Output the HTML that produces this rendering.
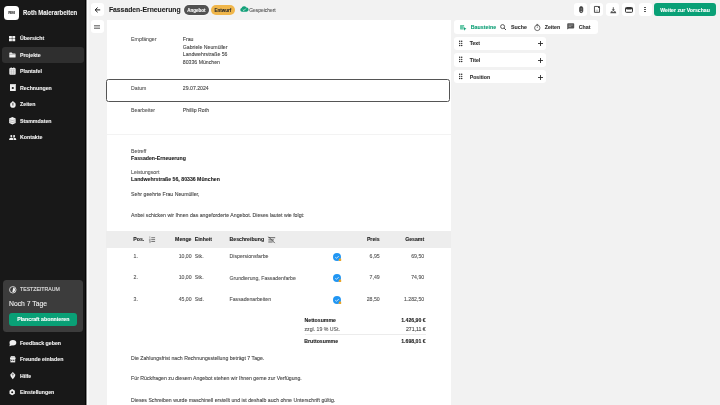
<!DOCTYPE html>
<html><head><meta charset="utf-8"><style>
html,body{margin:0;padding:0;}
body{width:720px;height:405px;overflow:hidden;position:relative;background:#f2f2f2;font-family:"Liberation Sans", sans-serif;}
.t{position:absolute;white-space:nowrap;}
body{will-change:transform;}
.r{position:absolute;display:block;overflow:visible;}
</style></head><body>
<div class="r" style="left:0px;top:0px;width:85px;height:405px;background:#181818;border-radius:0px;"></div>
<div class="r" style="left:85px;top:0px;width:1px;height:405px;background:#050505;border-radius:0px;"></div>
<div class="r" style="left:86px;top:0px;width:1px;height:405px;background:#8a8a8a;border-radius:0px;"></div>
<div class="r" style="left:87px;top:0px;width:1px;height:405px;background:#fcfcfc;border-radius:0px;"></div>
<div class="r" style="left:88px;top:0px;width:1px;height:405px;background:#f7f7f7;border-radius:0px;"></div>
<div class="r" style="left:4.4px;top:5.6px;width:14.6px;height:14.5px;background:#ffffff;border-radius:3.5px;"></div>
<div class="t" style="left:11.6px;top:11px;font-size:4.4px;line-height:4.4px;font-weight:700;color:#333;-webkit-text-stroke:0.1px #333;transform:translateX(-50%);transform-origin:center center;">RM</div>
<div class="t" style="left:23.3px;top:10px;font-size:6.8px;line-height:6.8px;font-weight:700;color:#f2f2f2;-webkit-text-stroke:0.1px #f2f2f2;transform:scaleX(0.88);transform-origin:left center;">Roth Malerarbeiten</div>
<div class="r" style="left:2.2px;top:46.5px;width:81.8px;height:16.3px;background:#2f2f2f;border-radius:3px;"></div>
<div class="t" style="left:20px;top:36px;font-size:5.25px;line-height:5.25px;font-weight:700;color:#f0f0f0;-webkit-text-stroke:0.1px #f0f0f0;">Übersicht</div>
<div class="t" style="left:20px;top:53px;font-size:5.25px;line-height:5.25px;font-weight:700;color:#f0f0f0;-webkit-text-stroke:0.1px #f0f0f0;">Projekte</div>
<div class="t" style="left:20px;top:69px;font-size:5.25px;line-height:5.25px;font-weight:700;color:#f0f0f0;-webkit-text-stroke:0.1px #f0f0f0;">Plantafel</div>
<div class="t" style="left:20px;top:86px;font-size:5.25px;line-height:5.25px;font-weight:700;color:#f0f0f0;-webkit-text-stroke:0.1px #f0f0f0;">Rechnungen</div>
<div class="t" style="left:20px;top:102px;font-size:5.25px;line-height:5.25px;font-weight:700;color:#f0f0f0;-webkit-text-stroke:0.1px #f0f0f0;">Zeiten</div>
<div class="t" style="left:20px;top:119px;font-size:5.25px;line-height:5.25px;font-weight:700;color:#f0f0f0;-webkit-text-stroke:0.1px #f0f0f0;">Stammdaten</div>
<div class="t" style="left:20px;top:135px;font-size:5.25px;line-height:5.25px;font-weight:700;color:#f0f0f0;-webkit-text-stroke:0.1px #f0f0f0;">Kontakte</div>
<svg class="r" style="left:9.1px;top:35.6px;" width="6.2" height="5.2" viewBox="0 0 6.2 5.2"><rect x="0" y="0" width="2.9" height="2.4" rx="0.3" fill="#f0f0f0"/><rect x="3.3" y="0" width="2.9" height="2.4" rx="0.3" fill="#f0f0f0"/><rect x="0" y="2.8" width="2.9" height="2.4" rx="0.3" fill="#f0f0f0"/><rect x="3.3" y="2.8" width="2.9" height="2.4" rx="0.3" fill="#f0f0f0"/></svg>
<svg class="r" style="left:8.9px;top:51.6px;" width="7" height="5.6" viewBox="0 0 7 5.6"><path d="M0.3 1.2 a0.6 0.6 0 0 1 0.6 -0.6 h1.8 l0.9 0.9 h2.4 a0.6 0.6 0 0 1 0.6 0.6 v2.8 a0.6 0.6 0 0 1 -0.6 0.6 h-5.1 a0.6 0.6 0 0 1 -0.6 -0.6z" fill="#f0f0f0"/><path d="M0.3 2.3 h6.3" stroke="#333" stroke-width="0.3"/></svg>
<svg class="r" style="left:8.9px;top:67.4px;" width="7" height="8" viewBox="0 0 7 8"><rect x="0.3" y="0.9" width="6.4" height="6.9" rx="1" fill="#f0f0f0"/><path d="M0.3 2.4h6.4M2.45 2.4v5.4M4.55 2.4v5.4M0.3 4.2h6.4M0.3 6h6.4" stroke="#9a9a9a" stroke-width="0.35"/><rect x="1.8" y="0" width="0.6" height="1.3" fill="#f0f0f0"/><rect x="4.6" y="0" width="0.6" height="1.3" fill="#f0f0f0"/></svg>
<svg class="r" style="left:9.5px;top:83.9px;" width="5.8" height="7.1" viewBox="0 0 5.8 7.1"><rect x="0" y="0" width="5.8" height="7.1" rx="0.5" fill="#f0f0f0"/><rect x="0" y="0" width="5.8" height="1.2" fill="#cfcfcf"/><circle cx="2.8" cy="4" r="1.1" fill="#181818"/></svg>
<svg class="r" style="left:9.5px;top:100.6px;" width="6" height="7" viewBox="0 0 6 7"><circle cx="2.9" cy="3.9" r="2.8" fill="#f0f0f0"/><rect x="2.4" y="0" width="1" height="1.3" fill="#f0f0f0"/><path d="M2.9 4.2 L2.9 2.4" stroke="#181818" stroke-width="0.8" stroke-linecap="round"/></svg>
<svg class="r" style="left:9px;top:116.7px;" width="6.8" height="7.5" viewBox="0 0 6.8 7.5"><path d="M3.4 0.1 L6.7 1.6 V5.9 L3.4 7.4 L0.1 5.9 V1.6Z" fill="#f0f0f0"/><path d="M0.1 2.7 Q3.4 4.2 6.7 2.7 M0.1 4.7 Q3.4 6.2 6.7 4.7" fill="none" stroke="#777" stroke-width="0.45"/></svg>
<svg class="r" style="left:8.9px;top:135.1px;" width="7.4" height="5.2" viewBox="0 0 7.4 5.2"><circle cx="2.3" cy="1.1" r="1.05" fill="#f0f0f0"/><circle cx="5.1" cy="1.1" r="1.05" fill="#f0f0f0"/><path d="M0 5.1 q0-2.6 2.3-2.6 q2.3 0 2.3 2.6z" fill="#f0f0f0"/><path d="M4.9 5.1 q0-2.3 -0.9 -2.5 q0.5 -0.1 1.1 -0.1 q2.3 0 2.3 2.6z" fill="#f0f0f0"/></svg>
<div class="r" style="left:3px;top:279.7px;width:80px;height:51.9px;background:#3c3c3c;border-radius:3.5px;"></div>
<svg class="r" style="left:9.1px;top:285.7px;" width="7.6" height="7.6" viewBox="0 0 7.6 7.6"><circle cx="3.8" cy="3.8" r="3.25" fill="none" stroke="#ddd" stroke-width="0.9"/><path d="M3.8 3.8 L4.3 1.5 A2.35 2.35 0 0 1 3.3 6.1 Z" fill="#f0f0f0"/></svg>
<div class="t" style="left:20px;top:287px;font-size:5.2px;line-height:5.2px;font-weight:400;color:#e0e0e0;-webkit-text-stroke:0.1px #e0e0e0;">TESTZEITRAUM</div>
<div class="t" style="left:8.9px;top:301px;font-size:6.9px;line-height:6.9px;font-weight:400;color:#f0f0f0;-webkit-text-stroke:0.1px #f0f0f0;transform:scaleX(0.985);transform-origin:left center;">Noch 7 Tage</div>
<div class="r" style="left:9.2px;top:313.2px;width:68.1px;height:12.9px;background:#09a076;border-radius:3px;"></div>
<div class="t" style="left:43.25px;top:317px;font-size:5.25px;line-height:5.25px;font-weight:700;color:#ffffff;-webkit-text-stroke:0.1px #ffffff;transform:translateX(-50%);transform-origin:center center;">Plancraft abonnieren</div>
<div class="t" style="left:19.9px;top:341px;font-size:5.25px;line-height:5.25px;font-weight:700;color:#f0f0f0;-webkit-text-stroke:0.1px #f0f0f0;">Feedback geben</div>
<div class="t" style="left:19.9px;top:357px;font-size:5.25px;line-height:5.25px;font-weight:700;color:#f0f0f0;-webkit-text-stroke:0.1px #f0f0f0;">Freunde einladen</div>
<div class="t" style="left:19.9px;top:374px;font-size:5.25px;line-height:5.25px;font-weight:700;color:#f0f0f0;-webkit-text-stroke:0.1px #f0f0f0;">Hilfe</div>
<div class="t" style="left:19.9px;top:390px;font-size:5.25px;line-height:5.25px;font-weight:700;color:#f0f0f0;-webkit-text-stroke:0.1px #f0f0f0;">Einstellungen</div>
<svg class="r" style="left:8.8px;top:339.8px;" width="7.4" height="6.4" viewBox="0 0 7.4 6.4"><ellipse cx="3.9" cy="2.8" rx="3.4" ry="2.7" fill="#f0f0f0"/><path d="M0.4 6.3 L1 3.6 L3 5.2z" fill="#f0f0f0"/></svg>
<svg class="r" style="left:9.5px;top:355.9px;" width="5.6" height="6.5" viewBox="0 0 5.6 6.5"><path d="M1 0 H4.6 L5.6 1.9 H0Z" fill="#cfcfcf"/><rect x="0" y="1.9" width="5.6" height="1.2" fill="#f0f0f0"/><rect x="0.4" y="3.1" width="4.8" height="3.3" fill="#e8e8e8"/><circle cx="1.8" cy="4.4" r="0.55" fill="#181818"/><circle cx="3.8" cy="4.4" r="0.55" fill="#181818"/></svg>
<svg class="r" style="left:9.7px;top:372px;" width="5.6" height="7.3" viewBox="0 0 5.6 7.3"><path d="M2.8 0.1 L5.4 2.8 Q5.4 4.4 2.8 7.2 Q0.2 4.4 0.2 2.8Z" fill="#f0f0f0"/><path d="M2.8 1.2v3.2M1.8 2.5h2" stroke="#666" stroke-width="0.6"/></svg>
<svg class="r" style="left:9.1px;top:388.8px;" width="6.4" height="6.6" viewBox="0 0 6.4 6.6"><path d="M3.2 0.1 L5.9 1.65 V4.75 L3.2 6.3 L0.5 4.75 V1.65Z" fill="#f0f0f0"/><circle cx="3.2" cy="3.2" r="1" fill="#181818"/></svg>
<div class="r" style="left:90.7px;top:2.8px;width:13.3px;height:13.3px;background:#ffffff;border-radius:3px;"></div>
<svg class="r" style="left:93.9px;top:6.8px;" width="6.6" height="5.8" viewBox="0 0 6.6 5.8"><path d="M6.2 2.9 H1.2 M3.6 0.5 L1.1 2.9 L3.6 5.3" fill="none" stroke="#222" stroke-width="1"/></svg>
<div class="r" style="left:90.7px;top:20px;width:13.3px;height:13.3px;background:#ffffff;border-radius:3px;"></div>
<svg class="r" style="left:94.3px;top:24.7px;" width="6" height="4" viewBox="0 0 6 4"><path d="M0 0.5h6M0 2h6M0 3.5h6" stroke="#555" stroke-width="0.7"/></svg>
<div class="t" style="left:108.9px;top:7px;font-size:6.8px;line-height:6.8px;font-weight:700;color:#1e1e1e;-webkit-text-stroke:0.1px #1e1e1e;">Fassaden-Erneuerung</div>
<div class="r" style="left:183.5px;top:4.9px;width:25.9px;height:10.4px;background:#525252;border-radius:5.2px;box-shadow:0 0 0 0.7px #fafafa;"></div>
<div class="t" style="left:196.45px;top:9px;font-size:4.5px;line-height:4.5px;font-weight:700;color:#ffffff;-webkit-text-stroke:0.1px #ffffff;transform:translateX(-50%);transform-origin:center center;">Angebot</div>
<div class="r" style="left:210.8px;top:4.9px;width:24.1px;height:10.4px;background:#f0b64a;border-radius:5.2px;"></div>
<div class="t" style="left:222.85px;top:9px;font-size:4.5px;line-height:4.5px;font-weight:700;color:#2a2a2a;-webkit-text-stroke:0.1px #2a2a2a;transform:translateX(-50%);transform-origin:center center;">Entwurf</div>
<svg class="r" style="left:240px;top:6.3px;" width="8.5" height="6" viewBox="0 0 8.5 6"><path d="M2 5.8 A1.9 1.9 0 0 1 1.6 2.1 A2.6 2.6 0 0 1 6.4 1.6 A2.1 2.1 0 0 1 6.6 5.8 Z" fill="#12a079"/><path d="M2.8 3.6 L3.9 4.6 L5.8 2.6" fill="none" stroke="#fff" stroke-width="0.7"/></svg>
<div class="t" style="left:249.3px;top:9px;font-size:4.9px;line-height:4.9px;font-weight:400;color:#555;-webkit-text-stroke:0.1px #555;">Gespeichert</div>
<div class="r" style="left:573.8px;top:2.8px;width:13.1px;height:13.4px;background:#ffffff;border-radius:3px;"></div>
<div class="r" style="left:590px;top:2.8px;width:13.1px;height:13.4px;background:#ffffff;border-radius:3px;"></div>
<div class="r" style="left:606.2px;top:2.8px;width:13.1px;height:13.4px;background:#ffffff;border-radius:3px;"></div>
<div class="r" style="left:622.3px;top:2.8px;width:13.1px;height:13.4px;background:#ffffff;border-radius:3px;"></div>
<div class="r" style="left:638.5px;top:2.8px;width:13.1px;height:13.4px;background:#ffffff;border-radius:3px;"></div>
<svg class="r" style="left:578.8px;top:5.9px;" width="4.4" height="7" viewBox="0 0 4.4 7"><path d="M0.55 5 V2.1 A1.65 1.65 0 0 1 3.85 2.1 V5 A1.65 1.65 0 0 1 0.55 5 Z" fill="#444" stroke="#333" stroke-width="0.6"/><path d="M2.2 2 V4.4" stroke="#bbb" stroke-width="0.5"/><rect x="1.6" y="5.2" width="1.3" height="0.7" fill="#eee"/></svg>
<svg class="r" style="left:593.9px;top:6.1px;" width="6" height="6.8" viewBox="0 0 6 6.8"><path d="M0.45 0.45 H3.6 L5.5 2.4 V6.35 H0.45Z" fill="none" stroke="#333" stroke-width="0.85"/><path d="M3.3 0.2 L5.8 2.7 L5.8 0.2Z" fill="#222"/><path d="M1.6 4.2h2.6M1.6 5.2h2.6" stroke="#999" stroke-width="0.5"/></svg>
<svg class="r" style="left:609.8px;top:6.6px;" width="6.6" height="6.4" viewBox="0 0 6.6 6.4"><path d="M3.3 0.2 V3" stroke="#555" stroke-width="0.9"/><path d="M1.6 2.4 L3.3 4.1 L5 2.4Z" fill="#333"/><path d="M0.3 6.2 Q0.4 4.3 1.8 4 L3.3 5.1 L4.8 4 Q6.2 4.3 6.3 6.2Z" fill="#555"/></svg>
<svg class="r" style="left:625.2px;top:6.7px;" width="8" height="5.8" viewBox="0 0 8 5.8"><rect x="0.5" y="0.5" width="7" height="4.8" rx="0.8" fill="none" stroke="#333" stroke-width="1"/><path d="M0.6 1 H7.4 V2 Q4 3.2 0.6 2Z" fill="#333"/></svg>
<div class="r" style="left:644.4px;top:7px;width:1.7px;height:1.2px;background:#333;border-radius:0.4px;"></div>
<div class="r" style="left:644.4px;top:9.1px;width:1.7px;height:1.2px;background:#333;border-radius:0.4px;"></div>
<div class="r" style="left:644.4px;top:11.2px;width:1.7px;height:1.2px;background:#333;border-radius:0.4px;"></div>
<div class="r" style="left:653.9px;top:2.7px;width:62.4px;height:13.6px;background:#09a076;border-radius:3px;"></div>
<div class="t" style="left:685.1px;top:8px;font-size:5.2px;line-height:5.2px;font-weight:700;color:#ffffff;-webkit-text-stroke:0.1px #ffffff;transform:translateX(-50%);transform-origin:center center;">Weiter zur Vorschau</div>
<div class="r" style="left:106.6px;top:19.8px;width:344.3px;height:386px;background:#ffffff;border-radius:0px;"></div>
<div class="t" style="left:131.1px;top:37px;font-size:5.2px;line-height:5.2px;font-weight:400;color:#5a5a5a;-webkit-text-stroke:0.1px #5a5a5a;">Empfänger</div>
<div class="t" style="left:182.8px;top:37px;font-size:5.2px;line-height:5.2px;font-weight:400;color:#474747;-webkit-text-stroke:0.1px #474747;">Frau</div>
<div class="t" style="left:182.8px;top:45px;font-size:5.2px;line-height:5.2px;font-weight:400;color:#474747;-webkit-text-stroke:0.1px #474747;">Gabriele Neumüller</div>
<div class="t" style="left:182.8px;top:52px;font-size:5.2px;line-height:5.2px;font-weight:400;color:#474747;-webkit-text-stroke:0.1px #474747;">Landwehrstraße 56</div>
<div class="t" style="left:182.8px;top:60px;font-size:5.2px;line-height:5.2px;font-weight:400;color:#474747;-webkit-text-stroke:0.1px #474747;">80336 München</div>
<div class="r" style="left:106.4px;top:79px;width:344.1px;height:22.5px;box-sizing:border-box;border:1.1px solid #555;border-radius:2.5px"></div>
<div class="t" style="left:131.1px;top:86px;font-size:5.2px;line-height:5.2px;font-weight:400;color:#5a5a5a;-webkit-text-stroke:0.1px #5a5a5a;">Datum</div>
<div class="t" style="left:182.8px;top:86px;font-size:5.2px;line-height:5.2px;font-weight:400;color:#474747;-webkit-text-stroke:0.1px #474747;">29.07.2024</div>
<div class="t" style="left:131.1px;top:108px;font-size:5.2px;line-height:5.2px;font-weight:400;color:#5a5a5a;-webkit-text-stroke:0.1px #5a5a5a;">Bearbeiter</div>
<div class="t" style="left:182.8px;top:108px;font-size:5.2px;line-height:5.2px;font-weight:400;color:#474747;-webkit-text-stroke:0.1px #474747;">Phillip Roth</div>
<div class="r" style="left:106.6px;top:134px;width:344.3px;height:1px;background:#f3f3f3;border-radius:0px;"></div>
<div class="t" style="left:131.1px;top:149px;font-size:5.2px;line-height:5.2px;font-weight:400;color:#5a5a5a;-webkit-text-stroke:0.1px #5a5a5a;">Betreff</div>
<div class="t" style="left:131.1px;top:156px;font-size:5.2px;line-height:5.2px;font-weight:700;color:#222;-webkit-text-stroke:0.1px #222;">Fassaden-Erneuerung</div>
<div class="t" style="left:131.1px;top:170px;font-size:5.2px;line-height:5.2px;font-weight:400;color:#5a5a5a;-webkit-text-stroke:0.1px #5a5a5a;">Leistungsort</div>
<div class="t" style="left:131.1px;top:177px;font-size:5.2px;line-height:5.2px;font-weight:700;color:#222;-webkit-text-stroke:0.1px #222;">Landwehrstraße 56, 80336 München</div>
<div class="t" style="left:131.1px;top:192px;font-size:5.2px;line-height:5.2px;font-weight:400;color:#474747;-webkit-text-stroke:0.1px #474747;">Sehr geehrte Frau Neumüller,</div>
<div class="t" style="left:131.1px;top:213px;font-size:5.2px;line-height:5.2px;font-weight:400;color:#474747;-webkit-text-stroke:0.1px #474747;">Anbei schicken wir Ihnen das angeforderte Angebot. Dieses lautet wie folgt:</div>
<div class="r" style="left:106.3px;top:231px;width:344.4px;height:16.7px;background:#ededed;border-radius:0px;"></div>
<div class="t" style="left:133.3px;top:237px;font-size:5.2px;line-height:5.2px;font-weight:700;color:#222;-webkit-text-stroke:0.1px #222;">Pos.</div>
<svg class="r" style="left:148.8px;top:235.8px;" width="6.4" height="7" viewBox="0 0 6.4 7"><path d="M2.3 1.7H6.1M2.3 3.6H6.1M2.3 5.5H6.1" stroke="#444" stroke-width="0.7"/><path d="M0.8 0.3V2M0.3 2.9H1.3V3.6H0.3V4.4H1.3M0.3 4.9H1.3V6.6H0.3M0.3 5.7H1.3" fill="none" stroke="#666" stroke-width="0.45"/></svg>
<div class="t" style="right:528.5px;top:237px;font-size:5.2px;line-height:5.2px;font-weight:700;color:#222;-webkit-text-stroke:0.1px #222;">Menge</div>
<div class="t" style="left:194.7px;top:237px;font-size:5.2px;line-height:5.2px;font-weight:700;color:#222;-webkit-text-stroke:0.1px #222;">Einheit</div>
<div class="t" style="left:229.5px;top:237px;font-size:5.2px;line-height:5.2px;font-weight:700;color:#222;-webkit-text-stroke:0.1px #222;">Beschreibung</div>
<svg class="r" style="left:268px;top:235.5px;" width="7.6" height="7.6" viewBox="0 0 7.6 7.6"><path d="M0.4 1.7H7.2M0.4 3.9H5.9M0.3 6H4.6M0.4 0.7L6.8 7.1" fill="none" stroke="#333" stroke-width="0.75"/></svg>
<div class="t" style="right:340.4px;top:237px;font-size:5.2px;line-height:5.2px;font-weight:700;color:#222;-webkit-text-stroke:0.1px #222;">Preis</div>
<div class="t" style="right:295.8px;top:237px;font-size:5.2px;line-height:5.2px;font-weight:700;color:#222;-webkit-text-stroke:0.1px #222;">Gesamt</div>
<div class="t" style="left:133.5px;top:254px;font-size:5.2px;line-height:5.2px;font-weight:400;color:#555;-webkit-text-stroke:0.1px #555;">1.</div>
<div class="t" style="right:528.4px;top:254px;font-size:5.2px;line-height:5.2px;font-weight:400;color:#555;-webkit-text-stroke:0.1px #555;">10,00</div>
<div class="t" style="left:194.7px;top:254px;font-size:5.2px;line-height:5.2px;font-weight:400;color:#555;-webkit-text-stroke:0.1px #555;">Stk.</div>
<div class="t" style="left:229.5px;top:254px;font-size:5.2px;line-height:5.2px;font-weight:400;color:#555;-webkit-text-stroke:0.1px #555;">Dispersionsfarbe</div>
<div class="t" style="right:340.3px;top:254px;font-size:5.2px;line-height:5.2px;font-weight:400;color:#555;-webkit-text-stroke:0.1px #555;">6,95</div>
<div class="t" style="right:295.8px;top:254px;font-size:5.2px;line-height:5.2px;font-weight:400;color:#555;-webkit-text-stroke:0.1px #555;">69,50</div>
<svg class="r" style="left:333px;top:252.9px;" width="9" height="8.2" viewBox="0 0 9 8.2"><circle cx="4" cy="4" r="4" fill="#2196f3"/><path d="M2.3 4.3 L3.5 5.3 L5.7 3.1" fill="none" stroke="#fff" stroke-width="0.75"/><rect x="5.8" y="5.5" width="2.4" height="2.4" rx="0.5" fill="#e9a52a"/></svg>
<div class="t" style="left:133.5px;top:275px;font-size:5.2px;line-height:5.2px;font-weight:400;color:#555;-webkit-text-stroke:0.1px #555;">2.</div>
<div class="t" style="right:528.4px;top:275px;font-size:5.2px;line-height:5.2px;font-weight:400;color:#555;-webkit-text-stroke:0.1px #555;">10,00</div>
<div class="t" style="left:194.7px;top:275px;font-size:5.2px;line-height:5.2px;font-weight:400;color:#555;-webkit-text-stroke:0.1px #555;">Stk.</div>
<div class="t" style="left:229.5px;top:276px;font-size:5.2px;line-height:5.2px;font-weight:400;color:#555;-webkit-text-stroke:0.1px #555;">Grundierung, Fassadenfarbe</div>
<div class="t" style="right:340.3px;top:275px;font-size:5.2px;line-height:5.2px;font-weight:400;color:#555;-webkit-text-stroke:0.1px #555;">7,49</div>
<div class="t" style="right:295.8px;top:275px;font-size:5.2px;line-height:5.2px;font-weight:400;color:#555;-webkit-text-stroke:0.1px #555;">74,90</div>
<svg class="r" style="left:333px;top:274.35px;" width="9" height="8.2" viewBox="0 0 9 8.2"><circle cx="4" cy="4" r="4" fill="#2196f3"/><path d="M2.3 4.3 L3.5 5.3 L5.7 3.1" fill="none" stroke="#fff" stroke-width="0.75"/><rect x="5.8" y="5.5" width="2.4" height="2.4" rx="0.5" fill="#e9a52a"/></svg>
<div class="t" style="left:133.5px;top:297px;font-size:5.2px;line-height:5.2px;font-weight:400;color:#555;-webkit-text-stroke:0.1px #555;">3.</div>
<div class="t" style="right:528.4px;top:297px;font-size:5.2px;line-height:5.2px;font-weight:400;color:#555;-webkit-text-stroke:0.1px #555;">45,00</div>
<div class="t" style="left:194.7px;top:297px;font-size:5.2px;line-height:5.2px;font-weight:400;color:#555;-webkit-text-stroke:0.1px #555;">Std.</div>
<div class="t" style="left:229.5px;top:297px;font-size:5.2px;line-height:5.2px;font-weight:400;color:#555;-webkit-text-stroke:0.1px #555;">Fassadenarbeiten</div>
<div class="t" style="right:340.3px;top:297px;font-size:5.2px;line-height:5.2px;font-weight:400;color:#555;-webkit-text-stroke:0.1px #555;">28,50</div>
<div class="t" style="right:295.8px;top:297px;font-size:5.2px;line-height:5.2px;font-weight:400;color:#555;-webkit-text-stroke:0.1px #555;">1.282,50</div>
<svg class="r" style="left:333px;top:295.8px;" width="9" height="8.2" viewBox="0 0 9 8.2"><circle cx="4" cy="4" r="4" fill="#2196f3"/><path d="M2.3 4.3 L3.5 5.3 L5.7 3.1" fill="none" stroke="#fff" stroke-width="0.75"/><rect x="5.8" y="5.5" width="2.4" height="2.4" rx="0.5" fill="#e9a52a"/></svg>
<div class="t" style="left:304.5px;top:318px;font-size:5.2px;line-height:5.2px;font-weight:700;color:#222;-webkit-text-stroke:0.1px #222;">Nettosumme</div>
<div class="t" style="right:294.3px;top:318px;font-size:5.2px;line-height:5.2px;font-weight:700;color:#222;-webkit-text-stroke:0.1px #222;">1.426,90 €</div>
<div class="t" style="left:304.5px;top:327px;font-size:5.2px;line-height:5.2px;font-weight:400;color:#5a5a5a;-webkit-text-stroke:0.1px #5a5a5a;">zzgl. 19 % USt.</div>
<div class="t" style="right:294.3px;top:327px;font-size:5.2px;line-height:5.2px;font-weight:400;color:#444;-webkit-text-stroke:0.1px #444;">271,11 €</div>
<div class="r" style="left:304.5px;top:334px;width:121.2px;height:1px;background:#ececec;border-radius:0px;"></div>
<div class="t" style="left:304.3px;top:339px;font-size:5.2px;line-height:5.2px;font-weight:700;color:#222;-webkit-text-stroke:0.1px #222;">Bruttosumme</div>
<div class="t" style="right:294.3px;top:339px;font-size:5.2px;line-height:5.2px;font-weight:700;color:#222;-webkit-text-stroke:0.1px #222;">1.698,01 €</div>
<div class="t" style="left:131.1px;top:356px;font-size:5.2px;line-height:5.2px;font-weight:400;color:#474747;-webkit-text-stroke:0.1px #474747;">Die Zahlungsfrist nach Rechnungsstellung beträgt 7 Tage.</div>
<div class="t" style="left:131.1px;top:376px;font-size:5.2px;line-height:5.2px;font-weight:400;color:#474747;-webkit-text-stroke:0.1px #474747;">Für Rückfragen zu diesem Angebot stehen wir Ihnen gerne zur Verfügung.</div>
<div class="t" style="left:131.1px;top:398px;font-size:5.2px;line-height:5.2px;font-weight:400;color:#474747;-webkit-text-stroke:0.1px #474747;">Dieses Schreiben wurde maschinell erstellt und ist deshalb auch ohne Unterschrift gültig.</div>
<div class="r" style="left:453.6px;top:20px;width:144.2px;height:14.1px;background:#ffffff;border-radius:3px;"></div>
<svg class="r" style="left:459.6px;top:24.6px;" width="6.8" height="5.8" viewBox="0 0 6.8 5.8"><rect x="0.1" y="0.1" width="4" height="4.3" rx="0.3" fill="#5cc4a2"/><path d="M2.1 0.1V4.4" stroke="#b8e6d6" stroke-width="0.35"/><path d="M3.4 1.7 L6.5 4.1 L5.1 4.3 L4.4 5.7 Z" fill="#fff" stroke="#fff" stroke-width="0.6"/><path d="M3.4 1.7 L6.5 4.1 L5.1 4.3 L4.4 5.7 Z" fill="#10a077"/></svg>
<div class="t" style="left:470.8px;top:25px;font-size:5.3px;line-height:5.3px;font-weight:700;color:#10a077;-webkit-text-stroke:0.1px #10a077;">Bausteine</div>
<svg class="r" style="left:500px;top:24.4px;" width="6.4" height="6.4" viewBox="0 0 6.4 6.4"><circle cx="2.6" cy="2.6" r="2" fill="none" stroke="#333" stroke-width="0.8"/><path d="M4.1 4.1 L6 6" stroke="#333" stroke-width="0.9"/></svg>
<div class="t" style="left:511px;top:25px;font-size:5.3px;line-height:5.3px;font-weight:700;color:#333;-webkit-text-stroke:0.1px #333;">Suche</div>
<svg class="r" style="left:533.8px;top:23.8px;" width="6.6" height="7" viewBox="0 0 6.6 7"><circle cx="3.3" cy="3.9" r="2.7" fill="none" stroke="#333" stroke-width="0.7"/><path d="M2.3 0.4h2M3.3 0.4v1.2M3.3 3.9V2.5" stroke="#333" stroke-width="0.6"/></svg>
<div class="t" style="left:544.7px;top:25px;font-size:5.3px;line-height:5.3px;font-weight:700;color:#333;-webkit-text-stroke:0.1px #333;">Zeiten</div>
<svg class="r" style="left:567.1px;top:23.2px;" width="7.4" height="6.6" viewBox="0 0 7.4 6.6"><rect x="0.2" y="0.2" width="7" height="5.2" rx="0.9" fill="#555"/><path d="M1.6 2.1h4.2M1.6 3.6h2.6" stroke="#bbb" stroke-width="0.6"/><path d="M0.2 5 L0.2 6.6 L2 5z" fill="#555"/></svg>
<div class="t" style="left:578.7px;top:25px;font-size:5.3px;line-height:5.3px;font-weight:700;color:#333;-webkit-text-stroke:0.1px #333;">Chat</div>
<div class="r" style="left:453.6px;top:36.7px;width:92.8px;height:13.3px;background:#ffffff;border-radius:3px;"></div>
<svg class="r" style="left:459px;top:40px;" width="4" height="7" viewBox="0 0 4 7"><circle cx="0.7" cy="1.3" r="0.72" fill="#222"/><circle cx="2.7" cy="1.3" r="0.72" fill="#222"/><circle cx="0.7" cy="3.35" r="0.72" fill="#222"/><circle cx="2.7" cy="3.35" r="0.72" fill="#222"/><circle cx="0.7" cy="5.45" r="0.72" fill="#222"/><circle cx="2.7" cy="5.45" r="0.72" fill="#222"/></svg>
<div class="t" style="left:469.7px;top:41px;font-size:5.2px;line-height:5.2px;font-weight:700;color:#333;-webkit-text-stroke:0.1px #333;">Text</div>
<svg class="r" style="left:538px;top:41.2px;" width="5" height="5" viewBox="0 0 5 5"><path d="M2.5 0v5M0 2.5h5" stroke="#222" stroke-width="0.85"/></svg>
<div class="r" style="left:453.6px;top:53.45px;width:92.8px;height:13.3px;background:#ffffff;border-radius:3px;"></div>
<svg class="r" style="left:459px;top:56px;" width="4" height="7" viewBox="0 0 4 7"><circle cx="0.7" cy="1.3" r="0.72" fill="#222"/><circle cx="2.7" cy="1.3" r="0.72" fill="#222"/><circle cx="0.7" cy="3.35" r="0.72" fill="#222"/><circle cx="2.7" cy="3.35" r="0.72" fill="#222"/><circle cx="0.7" cy="5.45" r="0.72" fill="#222"/><circle cx="2.7" cy="5.45" r="0.72" fill="#222"/></svg>
<div class="t" style="left:469.7px;top:58px;font-size:5.2px;line-height:5.2px;font-weight:700;color:#333;-webkit-text-stroke:0.1px #333;">Titel</div>
<svg class="r" style="left:538px;top:57.95px;" width="5" height="5" viewBox="0 0 5 5"><path d="M2.5 0v5M0 2.5h5" stroke="#222" stroke-width="0.85"/></svg>
<div class="r" style="left:453.6px;top:70.2px;width:92.8px;height:13.3px;background:#ffffff;border-radius:3px;"></div>
<svg class="r" style="left:459px;top:73px;" width="4" height="7" viewBox="0 0 4 7"><circle cx="0.7" cy="1.3" r="0.72" fill="#222"/><circle cx="2.7" cy="1.3" r="0.72" fill="#222"/><circle cx="0.7" cy="3.35" r="0.72" fill="#222"/><circle cx="2.7" cy="3.35" r="0.72" fill="#222"/><circle cx="0.7" cy="5.45" r="0.72" fill="#222"/><circle cx="2.7" cy="5.45" r="0.72" fill="#222"/></svg>
<div class="t" style="left:469.7px;top:75px;font-size:5.2px;line-height:5.2px;font-weight:700;color:#333;-webkit-text-stroke:0.1px #333;">Position</div>
<svg class="r" style="left:538px;top:74.7px;" width="5" height="5" viewBox="0 0 5 5"><path d="M2.5 0v5M0 2.5h5" stroke="#222" stroke-width="0.85"/></svg>
</body></html>
